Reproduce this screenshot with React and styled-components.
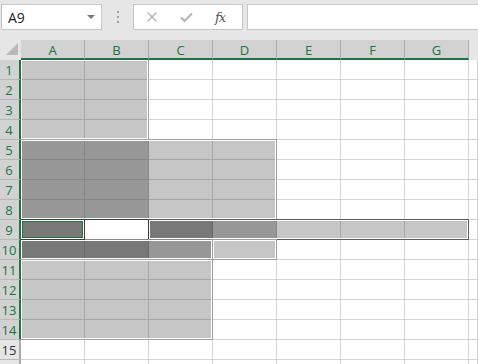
import React from 'react';
import styled, { createGlobalStyle } from 'styled-components';

const GlobalStyle = createGlobalStyle`
  html, body {
    margin: 0;
    padding: 0;
    background: #e6e6e6;
    overflow: hidden;
  }
  body {
    font-family: 'Open Sans', 'Liberation Sans', sans-serif;
  }
`;

const FILL = ['#ffffff', '#c6c6c6', '#979797', '#787878'];
const GRID = ['#d4d4d4', '#a6a6a6', '#878787', '#6a6a6a'];
const GREEN = '#217346';

const Toolbar = styled.div`
  height: 40px;
  display: flex;
  align-items: flex-start;
  padding: 4px 0 0 1px;
  box-sizing: border-box;
  background: #e6e6e6;
`;

const NameBox = styled.div`
  width: 101px;
  height: 26px;
  box-sizing: border-box;
  border: 1px solid #c6c6c6;
  background: #fff;
  display: flex;
  align-items: center;
  justify-content: space-between;
  padding: 0 6px 0 6px;
  font-size: 14px;
  color: #222;
`;

const Caret = styled.span`
  width: 0;
  height: 0;
  border-left: 4px solid transparent;
  border-right: 4px solid transparent;
  border-top: 4px solid #7a7a7a;
`;

const Grip = styled.div`
  width: 31px;
  height: 26px;
  display: flex;
  justify-content: center;
  align-items: center;
  svg { display: block; }
`;

const FxBox = styled.div`
  width: 110px;
  height: 26px;
  box-sizing: border-box;
  border: 1px solid #c6c6c6;
  background: #fff;
  display: flex;
  align-items: center;
  padding-left: 12px;
  gap: 22px;
`;

const Fx = styled.span`
  font-family: 'DejaVu Serif', 'Liberation Serif', serif;
  font-style: italic;
  font-size: 13px;
  color: #555;
  letter-spacing: -1px;
`;

const FormulaInput = styled.div`
  flex: 1;
  height: 26px;
  margin-left: 4px;
  box-sizing: border-box;
  border: 1px solid #c6c6c6;
  border-right: none;
  background: #fff;
`;

const Sheet = styled.div`
  position: relative;
  display: grid;
  grid-template-columns: 21px repeat(7, 64px) 1fr;
  grid-auto-rows: 20px;
  background: #fff;
`;

const Corner = styled.div`
  background: #e6e6e6;
  border-bottom: 2px solid #e6e6e6;
  box-sizing: border-box;
  display: flex;
  align-items: flex-end;
  justify-content: flex-end;
  padding: 0 3px 3px 0;
`;

const ColHeader = styled.div`
  box-sizing: border-box;
  background: ${p => (p.$on ? '#d2d2d2' : '#e6e6e6')};
  border-right: 1px solid ${p => (p.$on ? '#ababab' : '#e6e6e6')};
  border-bottom: 2px solid ${p => (p.$on ? GREEN : '#e6e6e6')};
  color: ${p => (p.$on ? GREEN : '#444')};
  font-size: 13px;
  display: flex;
  align-items: center;
  justify-content: center;
  padding-top: 1px;
`;

const RowHeader = styled.div`
  box-sizing: border-box;
  background: ${p => (p.$on ? '#d2d2d2' : '#e6e6e6')};
  border-right: 2px solid ${p => (p.$on ? GREEN : '#ababab')};
  border-bottom: 1px solid #b8b8b8;
  color: ${p => (p.$on ? GREEN : '#333')};
  font-size: 13px;
  display: flex;
  align-items: center;
  justify-content: center;
  padding-right: 1px;
`;

const Cell = styled.div`
  box-sizing: border-box;
  background: ${p => FILL[p.$level]};
  border-right: 1px solid ${p => GRID[p.$level]};
  border-bottom: 1px solid ${p => GRID[p.$level]};
`;

const Outline = styled.div`
  position: absolute;
  box-sizing: border-box;
  left: ${p => 20 + 64 * p.$c0}px;
  top: ${p => 19 + 20 * (p.$r0 - 1)}px;
  width: ${p => 64 * (p.$c1 - p.$c0 + 1) + 1}px;
  height: ${p => 20 * (p.$r1 - p.$r0 + 1) + 1}px;
  border: 1px solid ${p => p.$edge || 'transparent'};
  border-left-color: ${p => (p.$c0 === 0 ? 'transparent' : p.$edge || 'transparent')};
  box-shadow: inset 0 0 0 1px #fff ${p => (p.$active ? `, inset 0 0 0 2px ${GREEN}` : '')};
  pointer-events: none;
`;

// fill level per row for columns A..G (row 16 is only partly visible)
const levels = {
  1: [1, 1, 0, 0, 0, 0, 0],
  2: [1, 1, 0, 0, 0, 0, 0],
  3: [1, 1, 0, 0, 0, 0, 0],
  4: [1, 1, 0, 0, 0, 0, 0],
  5: [2, 2, 1, 1, 0, 0, 0],
  6: [2, 2, 1, 1, 0, 0, 0],
  7: [2, 2, 1, 1, 0, 0, 0],
  8: [2, 2, 1, 1, 0, 0, 0],
  9: [3, 0, 3, 2, 1, 1, 1],
  10: [3, 3, 2, 1, 0, 0, 0],
  11: [1, 1, 1, 0, 0, 0, 0],
  12: [1, 1, 1, 0, 0, 0, 0],
  13: [1, 1, 1, 0, 0, 0, 0],
  14: [1, 1, 1, 0, 0, 0, 0],
  15: [0, 0, 0, 0, 0, 0, 0],
  16: [0, 0, 0, 0, 0, 0, 0],
};

const outlines = [
  { c0: 0, c1: 1, r0: 1, r1: 4 },
  { c0: 0, c1: 3, r0: 5, r1: 8, edge: '#a0a0a0' },
  { c0: 2, c1: 6, r0: 9, r1: 9, edge: '#5c5c5c' },
  { c0: 1, c1: 1, r0: 9, r1: 9, edge: '#3c3c3c' },
  { c0: 0, c1: 2, r0: 10, r1: 10, edge: '#8a8a8a' },
  { c0: 3, c1: 3, r0: 10, r1: 10, edge: '#a0a0a0' },
  { c0: 0, c1: 2, r0: 11, r1: 14, edge: '#a0a0a0' },
  { c0: 0, c1: 0, r0: 9, r1: 9, edge: '#3c3c3c', active: true },
];

const cols = ['A', 'B', 'C', 'D', 'E', 'F', 'G'];

const App = () => (
  <>
    <GlobalStyle />
    <Toolbar>
      <NameBox>
        <span>A9</span>
        <Caret />
      </NameBox>
      <Grip>
        <svg width="3" height="12" viewBox="0 0 3 12">
          <rect x="1" y="0" width="2" height="2" fill="#a0a0a0" />
          <rect x="1" y="5" width="2" height="2" fill="#a0a0a0" />
          <rect x="1" y="10" width="2" height="2" fill="#a0a0a0" />
        </svg>
      </Grip>
      <FxBox>
        <svg width="12" height="12" viewBox="0 0 12 12">
          <path d="M1.5 1.5 L10.5 10.5 M10.5 1.5 L1.5 10.5" stroke="#b4b4b4" strokeWidth="1.3" fill="none" />
        </svg>
        <svg width="13" height="11" viewBox="0 0 13 11">
          <path d="M1 5.5 L4.5 9 L12 1.5" stroke="#b4b4b4" strokeWidth="2" fill="none" />
        </svg>
        <Fx>fx</Fx>
      </FxBox>
      <FormulaInput />
    </Toolbar>
    <Sheet>
      <Corner>
        <svg width="12" height="12" viewBox="0 0 12 12">
          <polygon points="12,0 12,12 0,12" fill="#b8b8b8" />
        </svg>
      </Corner>
      {cols.map(c => (
        <ColHeader key={c} $on>
          {c}
        </ColHeader>
      ))}
      <ColHeader />
      {Object.keys(levels).map(r => (
        <React.Fragment key={r}>
          <RowHeader $on={r <= 14}>{r <= 15 ? r : ''}</RowHeader>
          {levels[r].map((lv, i) => (
            <Cell key={i} $level={lv} />
          ))}
          <Cell $level={0} />
        </React.Fragment>
      ))}
      {outlines.map((o, i) => (
        <Outline
          key={i}
          $c0={o.c0}
          $c1={o.c1}
          $r0={o.r0}
          $r1={o.r1}
          $edge={o.edge}
          $active={o.active}
        />
      ))}
    </Sheet>
  </>
);

export default App;
